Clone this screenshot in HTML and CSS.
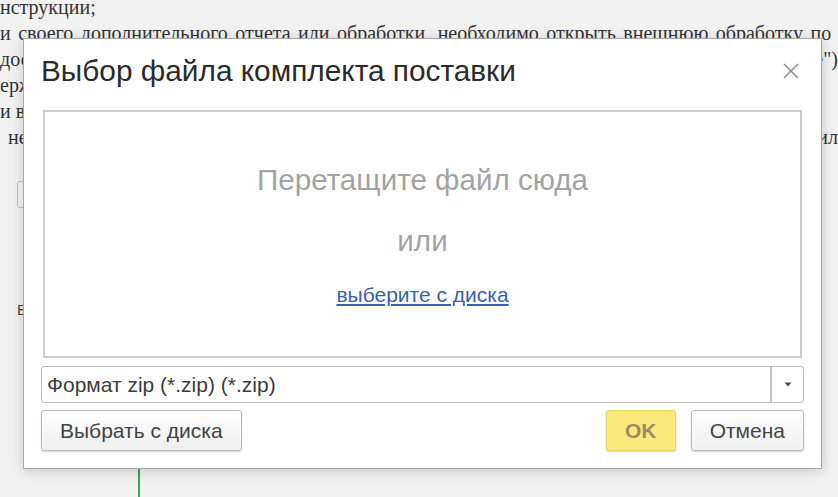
FILE: index.html
```html
<!DOCTYPE html>
<html>

<head>
    <title>Выбор файла комплекта поставки</title>
    <link rel="stylesheet" href="styles.css">
</head>

<body>
    <!-- Страница инструкции под модальным окном -->
    <div class="page">
        <div class="line">нструкции;</div>
        <div class="line wide">и своего дополнительного отчета или обработки, необходимо открыть внешнюю обработку по</div>
        <div class="line split"><span>дос</span><span>е")</span></div>
        <div class="line">ерж</div>
        <div class="line">и в</div>
        <div class="line split indent"><span>не</span><span>ил</span></div>
        <div class="stub-button"></div>
        <div class="stub-label">В</div>
        <div class="splitter"></div>
    </div>

    <div class="dialog">
        <div class="dialog-header">
            <h1>Выбор файла комплекта поставки</h1>
            <span class="close">
                <svg width="16" height="16" viewBox="0 0 16 16">
                    <path d="M1 1 L15 15 M15 1 L1 15" stroke="#8e8e8e" stroke-width="1.5" fill="none" />
                </svg>
            </span>
        </div>

        <div class="dropzone">
            <div class="drop-hint">Перетащите файл сюда</div>
            <div class="drop-or">или</div>
            <a class="drop-link" href="#">выберите с диска</a>
        </div>

        <div class="format-select">
            <span class="format-value">Формат zip (*.zip) (*.zip)</span>
            <span class="format-arrow">
                <svg width="8" height="5" viewBox="0 0 8 5">
                    <path d="M0.5 0.5 L7.5 0.5 L4 4.5 Z" fill="#4a4a4a" />
                </svg>
            </span>
        </div>

        <div class="dialog-buttons">
            <button class="btn">Выбрать с диска</button>
            <span class="spacer"></span>
            <button class="btn btn-ok">OK</button>
            <button class="btn">Отмена</button>
        </div>
    </div>
</body>

</html>
```

FILE: styles.css
```css
body {
    margin: 0;
    padding: 0;
    background-color: #f2f2f2;
    overflow: hidden;
    height: 497px;
}

.page {
    font-family: "Liberation Serif", "Times New Roman", serif;
    font-size: 20px;
    color: #333;
    height: 503px;
    margin-top: -6px;
    overflow: hidden;
}

.line {
    line-height: 26px;
    white-space: nowrap;
    overflow: hidden;
}

.wide {
    word-spacing: 2.5px;
}

.split {
    display: flex;
    justify-content: space-between;
}

.indent {
    padding-left: 8px;
}

.stub-button {
    margin: 31px 0 0 17px;
    width: 20px;
    height: 25px;
    border: 1px solid #c2c2c2;
    border-radius: 3px;
    background-color: #f7f7f7;
}

.stub-label {
    margin: 94px 0 0 17px;
    font-family: "Liberation Sans", Arial, sans-serif;
    font-size: 15px;
    line-height: 16px;
    color: #444;
}

.splitter {
    margin: 150px 0 0 138px;
    width: 2px;
    height: 40px;
    background-color: #3fa45c;
}

/* Модальное окно */
.dialog {
    position: absolute;
    left: 23px;
    top: 38px;
    width: 799px;
    height: 431px;
    box-sizing: border-box;
    border: 1px solid #a8a8a8;
    background-color: #fff;
    padding: 16px 17px 17px;
    display: flex;
    flex-direction: column;
    box-shadow: 0 2px 12px rgba(0, 0, 0, 0.18);
    font-family: "Liberation Sans", Arial, sans-serif;
}

.dialog-header {
    display: flex;
    justify-content: space-between;
    align-items: center;
    height: 32px;
    margin-bottom: 23px;
}

.dialog-header h1 {
    margin: 0;
    font-size: 29.8px;
    font-weight: normal;
    line-height: 32px;
    color: #2b2b2b;
}

.close {
    display: flex;
    margin-right: 5px;
}

.dropzone {
    height: 248px;
    margin: 0 2px;
    box-sizing: border-box;
    border: 2px solid #cccccc;
    display: flex;
    flex-direction: column;
    align-items: center;
    padding-top: 52px;
}

.drop-hint,
.drop-or {
    font-size: 29.6px;
    line-height: 32px;
    color: #a3a3a3;
}

.drop-or {
    margin-top: 29px;
}

.drop-link {
    margin-top: 26px;
    font-size: 21px;
    line-height: 24px;
    color: #3b5fae;
}

.format-select {
    margin-top: 8px;
    height: 37px;
    box-sizing: border-box;
    border: 1px solid #bdbdbd;
    border-radius: 3px;
    display: flex;
    align-items: stretch;
}

.format-value {
    flex: 1;
    display: flex;
    align-items: center;
    padding-left: 5px;
    font-size: 21px;
    color: #3c3c3c;
    border-right: 2px solid #c4c4c4;
}

.format-arrow {
    width: 31px;
    display: flex;
    align-items: center;
    justify-content: center;
}

.dialog-buttons {
    margin-top: 7px;
    height: 41px;
    display: flex;
    gap: 15px;
}

.spacer {
    flex: 1;
}

.btn {
    height: 41px;
    padding: 0 18px;
    border: 1px solid #bcbcbc;
    border-radius: 3px;
    background: linear-gradient(#ffffff, #f0f0f0);
    box-shadow: 0 1px 2px rgba(0, 0, 0, 0.18);
    font-family: "Liberation Sans", Arial, sans-serif;
    font-size: 21px;
    color: #444;
}

.btn-ok {
    width: 70px;
    padding: 0;
    background: #fce97c;
    border-color: #e8d66c;
    color: #978d68;
    font-weight: bold;
}
```
